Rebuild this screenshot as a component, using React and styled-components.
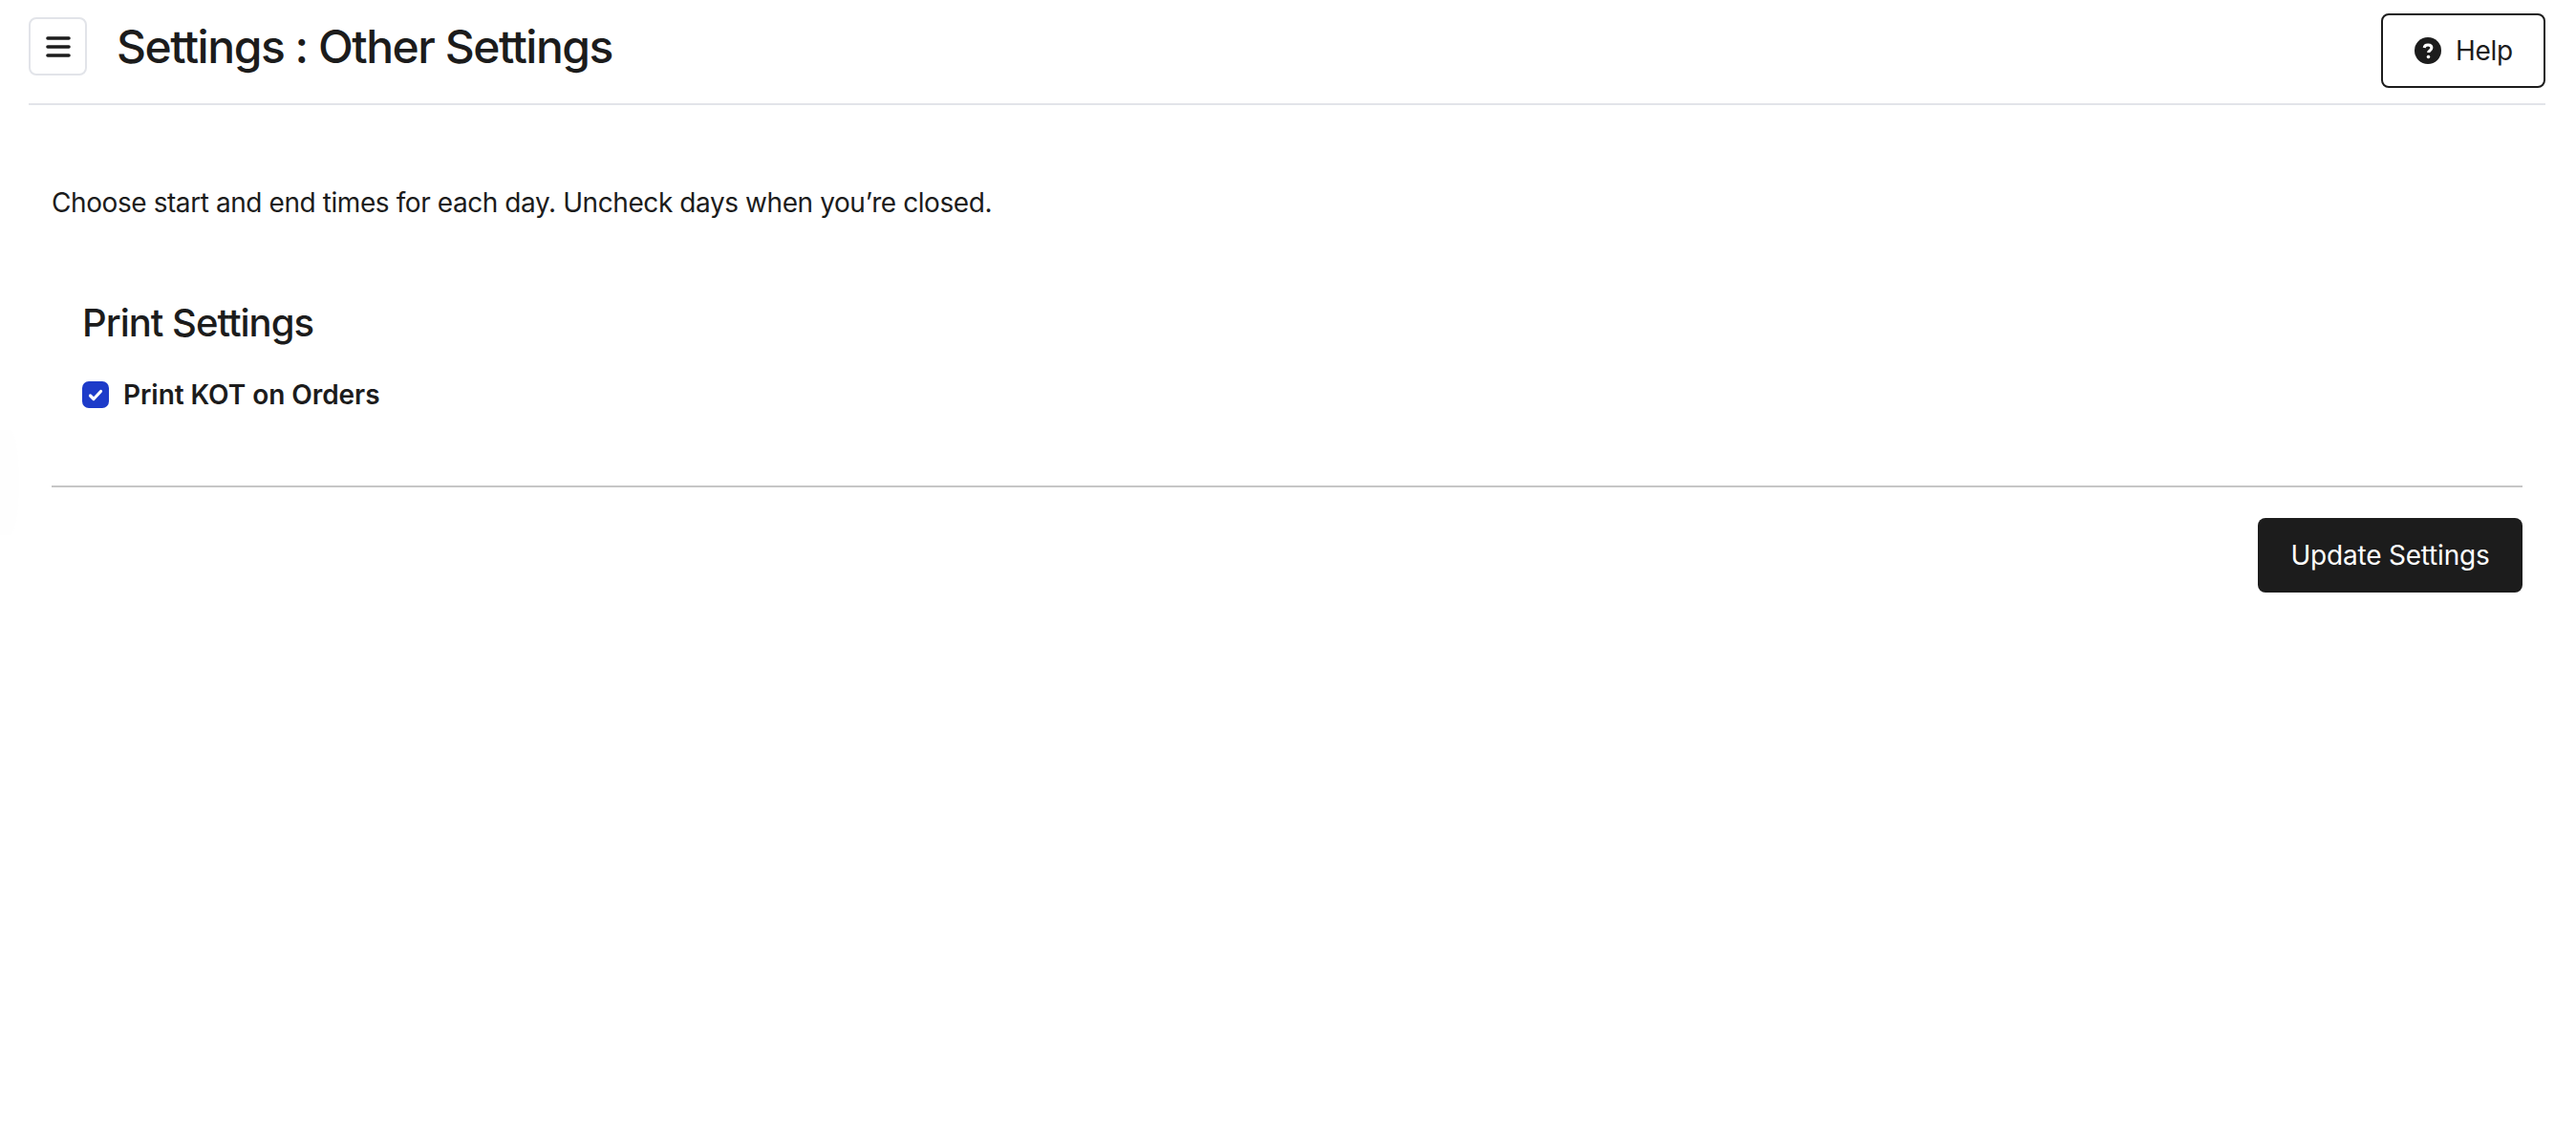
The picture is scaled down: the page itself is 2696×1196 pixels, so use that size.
import styled, { createGlobalStyle } from 'styled-components';

const GlobalStyle = createGlobalStyle`
  * {
    box-sizing: border-box;
  }
  body {
    margin: 0;
    background: #fff;
    color: #1c1c1c;
    font-family: Inter, "Liberation Sans", sans-serif;
  }
`;

const Page = styled.div`
  min-height: 100vh;
  padding: 0 32px 0 30px;
`;

const Header = styled.header`
  display: flex;
  align-items: flex-start;
  justify-content: space-between;
  height: 110px;
  padding-top: 14px;
  border-bottom: 2px solid #e2e4e9;
`;

const TitleGroup = styled.div`
  display: flex;
  align-items: center;
  gap: 31px;
  margin-top: 4px;
`;

const MenuButton = styled.button`
  display: flex;
  align-items: center;
  justify-content: center;
  width: 61px;
  height: 61px;
  padding: 0;
  background: #fff;
  color: #1c1c1c;
  border: 2px solid #e2e4e9;
  border-radius: 8px;
`;

const Title = styled.h1`
  margin: 0;
  font-size: 48px;
  line-height: 61px;
  font-weight: 500;
  letter-spacing: -1.48px;
`;

const HelpButton = styled.button`
  display: flex;
  align-items: center;
  gap: 15px;
  width: 172px;
  height: 78px;
  padding: 0 0 0 33px;
  background: #fff;
  color: #1c1c1c;
  border: 2px solid #1c1c1c;
  border-radius: 8px;
  font: inherit;
  font-size: 28px;
  letter-spacing: -0.3px;
`;

const Content = styled.main`
  padding: 0 24px;
`;

const Intro = styled.p`
  margin: 0;
  padding-top: 84px;
  font-size: 28px;
  line-height: 36px;
  letter-spacing: -0.42px;
`;

const Section = styled.section`
  padding: 83px 32px 0;
`;

const SectionTitle = styled.h2`
  margin: 0;
  font-size: 40px;
  line-height: 50px;
  font-weight: 500;
  letter-spacing: -1px;
`;

const CheckRow = styled.label`
  display: flex;
  align-items: center;
  gap: 15px;
  margin-top: 32px;
  font-size: 28px;
  line-height: 36px;
  font-weight: 600;
  letter-spacing: -0.05px;
`;

const CheckBox = styled.span`
  display: flex;
  align-items: center;
  justify-content: center;
  width: 28px;
  height: 28px;
  background: #1d3bc9;
  border-radius: 7px;
`;

const Divider = styled.hr`
  margin: 77px 0 0;
  border: 0;
  border-top: 2px solid #c6c6c6;
`;

const Actions = styled.div`
  display: flex;
  justify-content: flex-end;
  padding-top: 32px;
`;

const SaveButton = styled.button`
  width: 277px;
  height: 78px;
  padding: 0;
  background: #1c1c1c;
  color: #fff;
  border: 0;
  border-radius: 8px;
  font: inherit;
  font-size: 28px;
  letter-spacing: -0.2px;
`;

const EdgeTab = styled.div`
  position: absolute;
  left: 0;
  top: 450px;
  width: 20px;
  height: 110px;
  background: #fefefe;
  border-radius: 0 50% 50% 0;
`;

const HelpIcon = () => (
  <svg width="28" height="28" viewBox="0 0 28 28" aria-hidden="true">
    <circle cx="14" cy="14" r="14" fill="#1c1c1c" />
    <path
      d="M10.2 11c.2-2 1.8-3.1 3.9-3.1 2.2 0 3.8 1.2 3.8 3.1 0 1.5-.9 2.2-1.9 2.9-.9.6-1.4 1-1.4 2.1"
      fill="none"
      stroke="#fff"
      strokeWidth="3"
    />
    <circle cx="14.5" cy="20.5" r="1.8" fill="#fff" />
  </svg>
);

const App = () => (
  <Page>
    <GlobalStyle />
    <EdgeTab />
    <Header>
      <TitleGroup>
        <MenuButton aria-label="Toggle menu">
          <svg width="26" height="24" viewBox="0 0 26 24" aria-hidden="true">
            <path d="M2 3h22M2 12h22M2 21h22" stroke="#1c1c1c" strokeWidth="3.6" strokeLinecap="round" />
          </svg>
        </MenuButton>
        <Title>Settings : Other Settings</Title>
      </TitleGroup>
      <HelpButton>
        <HelpIcon />
        Help
      </HelpButton>
    </Header>
    <Content>
      <Intro>Choose start and end times for each day. Uncheck days when you’re closed.</Intro>
      <Section>
        <SectionTitle>Print Settings</SectionTitle>
        <CheckRow>
          <CheckBox>
            <svg width="16" height="13" viewBox="0 0 16 13" aria-hidden="true">
              <path d="M2.5 7L6 10.5l7.5-8" fill="none" stroke="#fff" strokeWidth="3.2" strokeLinecap="round" strokeLinejoin="round" />
            </svg>
          </CheckBox>
          Print KOT on Orders
        </CheckRow>
      </Section>
      <Divider />
      <Actions>
        <SaveButton>Update Settings</SaveButton>
      </Actions>
    </Content>
  </Page>
);

export default App;
